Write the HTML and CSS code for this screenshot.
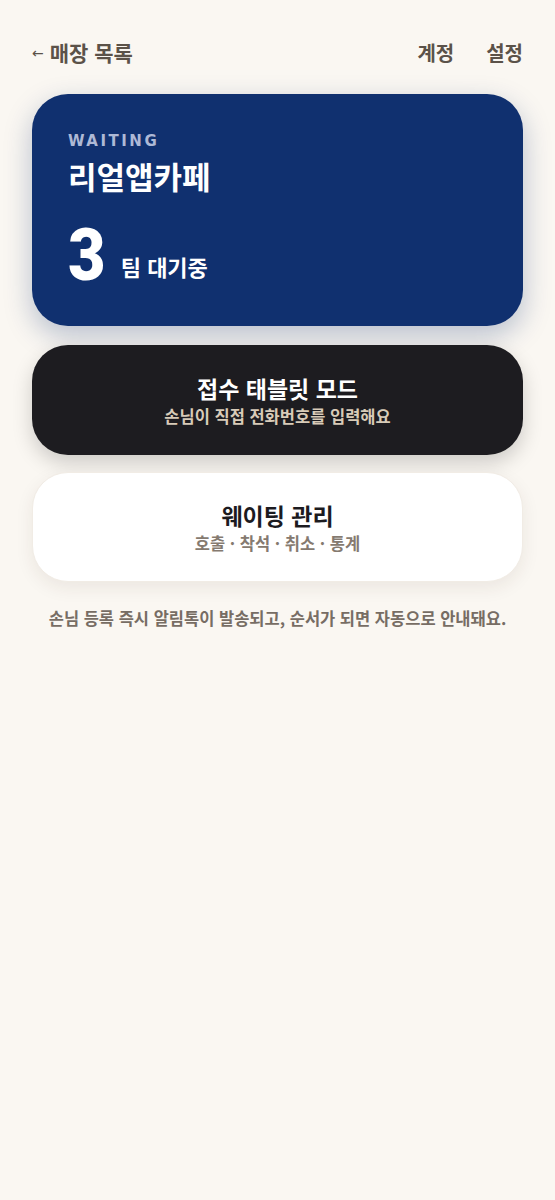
FILE: index.html
```html
<!DOCTYPE html>
<html lang="ko">
<head>
<meta charset="utf-8">
<link rel="stylesheet" href="styles.css">
</head>
<body>
<div class="page">
  <header class="top">
    <a class="back"><span class="arrow">←</span>매장 목록</a>
    <nav class="links"><a>계정</a><a>설정</a></nav>
  </header>
  <section class="hero">
    <div class="eyebrow">WAITING</div>
    <div class="store">리얼앱카페</div>
    <div class="count"><span class="num">3</span><span class="unit">팀 대기중</span></div>
  </section>
  <a class="tile dark">
    <div class="t-title">접수 태블릿 모드</div>
    <div class="t-sub">손님이 직접 전화번호를 입력해요</div>
  </a>
  <a class="tile light">
    <div class="t-title">웨이팅 관리</div>
    <div class="t-sub">호출 · 착석 · 취소 · 통계</div>
  </a>
  <p class="note">손님 등록 즉시 알림톡이 발송되고, 순서가 되면 자동으로 안내돼요.</p>
</div>
</body>
</html>
```
FILE: styles.css
```css
* { box-sizing: border-box; }
html, body { margin: 0; padding: 0; }
body {
  background: #faf7f2;
  font-family: "Noto Sans CJK KR", "Noto Sans", sans-serif;
  color: #1c1b1f;
  min-height: 1200px;
}
.page { padding: 36px 32px 0; display: flex; flex-direction: column; }
.top { display: flex; justify-content: space-between; align-items: center; height: 32px; }
.back { display: flex; align-items: center; font-size: 21px; font-weight: 700; color: #5b5249; }
.arrow { font-family: "DejaVu Sans", sans-serif; font-size: 14px; font-weight: 400; margin-right: 6px; margin-top: 2px; }
.links { display: flex; gap: 32px; }
.links a { font-size: 20px; font-weight: 700; color: #5b5249; }
.hero {
  margin-top: 26px;
  background: #10306f;
  border-radius: 36px;
  height: 232px;
  padding: 36px 36px 0;
  color: #fff;
  box-shadow: 0 10px 28px rgba(16, 48, 111, 0.28);
}
.eyebrow { font-size: 15px; font-weight: 700; letter-spacing: 2.5px; color: #aeb9d6; line-height: 22px; font-family: "DejaVu Sans", sans-serif; }
.store { font-size: 31px; font-weight: 700; line-height: 40px; margin-top: 4px; }
.count { display: flex; align-items: flex-end; margin-top: 32px; }
.num { display: inline-block; font-family: Roboto, "Liberation Sans", sans-serif; font-weight: 900; font-size: 72px; line-height: 56px; transform: scaleX(0.9); transform-origin: left center; }
.unit { font-size: 22px; font-weight: 700; line-height: 24px; margin-left: 11px; margin-bottom: 6px; }
.tile {
  display: flex; flex-direction: column; align-items: center; justify-content: center;
  height: 110px; border-radius: 36px; margin-top: 19px;
}
.tile.dark { background: #1d1c20; color: #fff; box-shadow: 0 8px 20px rgba(0,0,0,0.18); }
.tile.light { background: #fff; color: #1c1b1f; margin-top: 17px; box-shadow: 0 6px 18px rgba(60,40,20,0.08); border: 1px solid #f1ece5; }
.t-title { font-size: 23px; font-weight: 700; line-height: 30px; }
.t-sub { font-size: 16.5px; font-weight: 700; line-height: 24px; margin-top: 1px; }
.dark .t-sub { color: #d8cbb8; }
.light .t-sub { color: #857a70; }
.note { margin: 24px 0 0; text-align: center; font-size: 16.5px; font-weight: 700; color: #776d64; }
```
